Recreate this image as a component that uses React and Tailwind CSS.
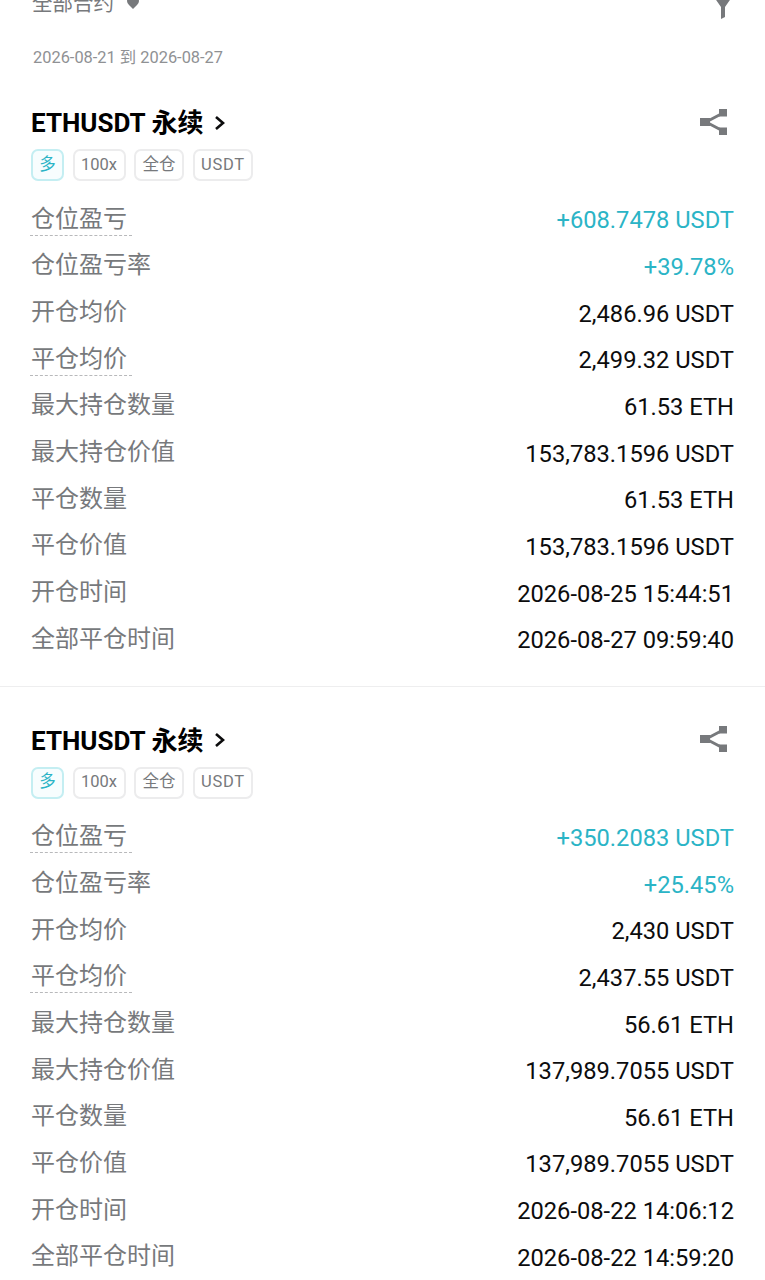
const FONT = "font-['Roboto','Noto_Sans_CJK_SC',sans-serif]";

const positions = [
  {
    rows: [
      ['仓位盈亏', '+608.7478 USDT', 'profit', true],
      ['仓位盈亏率', '+39.78%', 'profit', false],
      ['开仓均价', '2,486.96 USDT'],
      ['平仓均价', '2,499.32 USDT', '', true],
      ['最大持仓数量', '61.53 ETH'],
      ['最大持仓价值', '153,783.1596 USDT'],
      ['平仓数量', '61.53 ETH'],
      ['平仓价值', '153,783.1596 USDT'],
      ['开仓时间', '2026-08-25 15:44:51'],
      ['全部平仓时间', '2026-08-27 09:59:40'],
    ],
  },
  {
    rows: [
      ['仓位盈亏', '+350.2083 USDT', 'profit', true],
      ['仓位盈亏率', '+25.45%', 'profit', false],
      ['开仓均价', '2,430 USDT'],
      ['平仓均价', '2,437.55 USDT', '', true],
      ['最大持仓数量', '56.61 ETH'],
      ['最大持仓价值', '137,989.7055 USDT'],
      ['平仓数量', '56.61 ETH'],
      ['平仓价值', '137,989.7055 USDT'],
      ['开仓时间', '2026-08-22 14:06:12'],
      ['全部平仓时间', '2026-08-22 14:59:20'],
    ],
  },
];

function ShareIcon() {
  return (
    <svg width={30} height={28} viewBox="0 0 30 28" className="text-[#77797c]">
      <path d="M7 14 L24 5 M7 14 L24 23" stroke="currentColor" strokeWidth="3" fill="none" />
      <rect x="1" y="10" width="10" height="8" fill="currentColor" />
      <rect x="20" y="1" width="8" height="7.5" fill="currentColor" />
      <rect x="20" y="19.5" width="8" height="7.5" fill="currentColor" />
    </svg>
  );
}

function Tag({ children, long, wide }) {
  return (
    <span
      className={
        'flex h-[32px] items-center justify-center rounded-[7px] border-2 text-[16.5px] leading-none ' +
        (long
          ? 'w-[33px] border-[#c4eef2] bg-[#f7fdfe] text-[#2bb4c6]'
          : 'border-[#ececed] px-[6.5px] text-[#77797c]') +
        (wide ? ' tracking-[0.7px]' : '')
      }
    >
      {children}
    </span>
  );
}

function Row({ label, value, tone, dashed }) {
  return (
    <div className="flex h-[46.67px] items-center justify-between">
      <span className="relative pt-px text-[24px] leading-[34px] text-[#77797c]">
        {label}
        {dashed && (
          <span className="absolute -left-px top-[34px] w-[102px] border-t border-dashed border-[#b8b9bb]" />
        )}
      </span>
      <span
        className={'pt-[4px] text-[23.7px] leading-[34px] ' + (tone === 'profit' ? 'text-[#2bb4c6]' : 'text-[#0c0c0d]')}
      >
        {value}
      </span>
    </div>
  );
}

function PositionCard({ rows }) {
  return (
    <div className="border-b border-[#eeeeef] px-[31px] pb-[24px] pt-[36px] last:border-b-0">
      <div className="flex items-center justify-between">
        <div className="flex items-center gap-[11px]">
          <span className="text-[26px] font-bold leading-[36px] text-black">ETHUSDT 永续</span>
          <svg width={12} height={18} viewBox="0 0 12 18" className="mt-[-1px]">
            <path d="M2 3 L9 9 L2 15" stroke="#0c0c0d" strokeWidth="2.6" fill="none" />
          </svg>
        </div>
        <span className="mr-[5px] -mt-[3px]">
          <ShareIcon />
        </span>
      </div>
      <div className="mt-[8px] mb-[14px] flex gap-[8.5px]">
        <Tag long>多</Tag>
        <Tag>100x</Tag>
        <Tag>全仓</Tag>
        <Tag wide>USDT</Tag>
      </div>
      <div>
        {rows.map(([label, value, tone, dashed]) => (
          <Row key={label} label={label} value={value} tone={tone} dashed={dashed} />
        ))}
      </div>
    </div>
  );
}

export default function App() {
  return (
    <div className={'h-screen overflow-hidden bg-white ' + FONT}>
      <div className="-mt-[14px]">
        <div className="flex items-center justify-between px-[32px]">
          <div className="flex items-center gap-[12px] text-[20.5px] leading-[36px] text-[#77797c]">
            全部合约
            <svg width={14} height={12} viewBox="0 0 14 12">
              <path d="M1 3 Q1 1 3 1 L11 1 Q13 1 13 3 Q13 5 11 7 L7 11 L3 7 Q1 5 1 3 Z" fill="#77797c" />
            </svg>
          </div>
          <svg width={18} height={30} viewBox="0 0 18 30" className="mr-[1px]">
            <path d="M0 8 L18 8 L11 18 L11 28 L7 30 L7 18 Z" fill="#77797c" />
          </svg>
        </div>
        <div className="mt-[25px] px-[33px] text-[16.4px] leading-[22px] text-[#8f9194]">2026-08-21 到 2026-08-27</div>
        <div>
          {positions.map((p, i) => (
            <PositionCard key={i} rows={p.rows} />
          ))}
        </div>
      </div>
    </div>
  );
}
